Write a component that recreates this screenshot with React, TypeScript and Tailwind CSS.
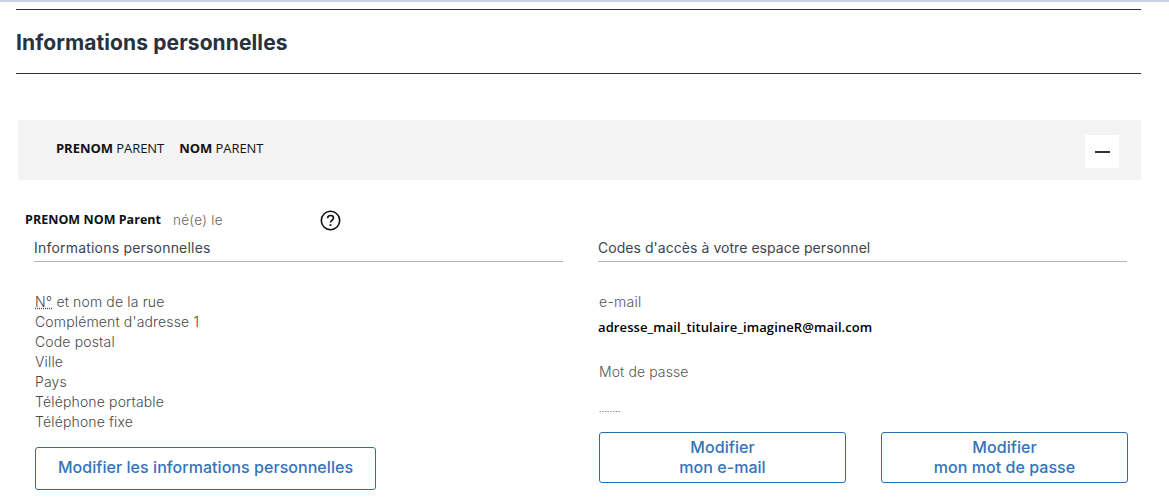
const raleway = "font-['Inter',sans-serif]";
const calibri = "font-['Open_Sans',sans-serif]";

const addressLines = [
  "et nom de la rue",
  "Complément d'adresse 1",
  "Code postal",
  "Ville",
  "Pays",
  "Téléphone portable",
  "Téléphone fixe",
];

function OutlineButton({ children, className }: { children: React.ReactNode; className: string }) {
  return (
    <button className={`flex shrink-0 items-center justify-center rounded-[3px] border border-[#2a6ead] bg-white text-center text-[16px] leading-[20px] font-medium tracking-[0.05px] text-[#3273ba] ${className}`}>
      {children}
    </button>
  );
}

export default function App() {
  return (
    <div className={`h-[501px] w-[1169px] overflow-hidden bg-white ${raleway} text-[#3d4650]`}>
      <div className="h-[2px] bg-[#c6d3e3]" />
      <div className="ml-4 mr-7 mt-[7px] border-y border-[#2b3138]">
        <h1 className="flex h-[63px] items-center pt-[2px] text-[21px] font-bold tracking-[0.1px] text-[#27313f]">
          Informations personnelles
        </h1>
      </div>
      <div className="ml-[18px] mr-7 mt-[46px] flex h-[60px] justify-between bg-[#f3f3f3]">
        <div className={`ml-[38px] mt-[19px] flex gap-[15px] text-[13px] leading-[18px] text-[#111] ${calibri}`}>
          <span className="tracking-[-0.05px]"><b>PRENOM</b> PARENT</span>
          <span className="tracking-[-0.05px]"><b>NOM</b> PARENT</span>
        </div>
        <div className="mr-[22px] mt-[15px] flex h-[33px] w-[34px] items-center justify-center bg-white">
          <div className="h-[2px] w-[15px] bg-[#333]" />
        </div>
      </div>
      <div className="ml-[25px] mt-[30px] flex h-[20px] items-center">
        <span className={`w-[148px] text-[12.5px] font-bold tracking-[0.03px] text-[#111] ${calibri}`}>PRENOM NOM Parent</span>
        <span className="w-[148px] text-[13.5px] font-light tracking-[0.3px] text-[#666]">né(e) le</span>
        <svg width="21" height="21" viewBox="0 0 21 21" fill="none" stroke="#111" className="-ml-[1px]">
          <circle cx="10.5" cy="10.5" r="9.2" strokeWidth="1.6" />
          <path d="M7.6 8.3c0-1.7 1.3-2.8 3-2.8s2.9 1 2.9 2.5c0 2.2-3 2.3-3 4.5" strokeWidth="1.6" />
          <path d="M10.5 14.2v1.8" strokeWidth="1.8" />
        </svg>
      </div>
      <div className="ml-[34px] mr-[42px] mt-[8px] flex justify-between">
        <section className="w-[529px]">
          <h2 className="h-[24px] border-b border-[#b5b5b5] pt-[1px] text-[14px] leading-[18px] font-normal tracking-[0.2px]">
            Informations personnelles
          </h2>
          <div className="ml-[1px] mt-[30px] text-[14px] leading-[20px] font-light tracking-[0.15px] text-[#4a4a4a]">
            {addressLines.map((line, i) => (
              <div key={line}>
                {i === 0 && <span className="underline decoration-dotted">N°</span>}
                {i === 0 && " "}
                {line}
              </div>
            ))}
          </div>
          <OutlineButton className="ml-[1px] mt-[15px] h-[43px] w-[341px] pb-[4px]">
            Modifier les informations personnelles
          </OutlineButton>
        </section>
        <section className="w-[529px]">
          <h2 className="h-[24px] border-b border-[#b5b5b5] pt-[1px] text-[14px] leading-[18px] font-normal tracking-[0.05px]">
            Codes d'accès à votre espace personnel
          </h2>
          <div className="ml-[1px] mt-[30px] text-[14px] leading-[20px] font-light tracking-[0.3px] text-[#555]">e-mail</div>
          <div className={`mt-[5px] h-[20px] text-[13px] leading-[20px] font-semibold tracking-[0.1px] text-black ${calibri}`}>
            adresse_mail_titulaire_imagineR@mail.com
          </div>
          <div className="ml-[1px] mt-[25px] text-[14px] leading-[20px] font-light tracking-[0.1px] text-[#555]">Mot de passe</div>
          <div className="ml-[1px] mt-[17px] h-[20px] text-[8px] leading-[20px] tracking-[0.4px] text-[#333]">........</div>
          <div className="ml-[1px] mt-[13px] flex gap-[35px]">
            <OutlineButton className="h-[51px] w-[247px] pb-[2px]">
              Modifier<br />mon e-mail
            </OutlineButton>
            <OutlineButton className="h-[51px] w-[247px] pb-[2px]">
              Modifier<br />mon mot de passe
            </OutlineButton>
          </div>
        </section>
      </div>
    </div>
  );
}
